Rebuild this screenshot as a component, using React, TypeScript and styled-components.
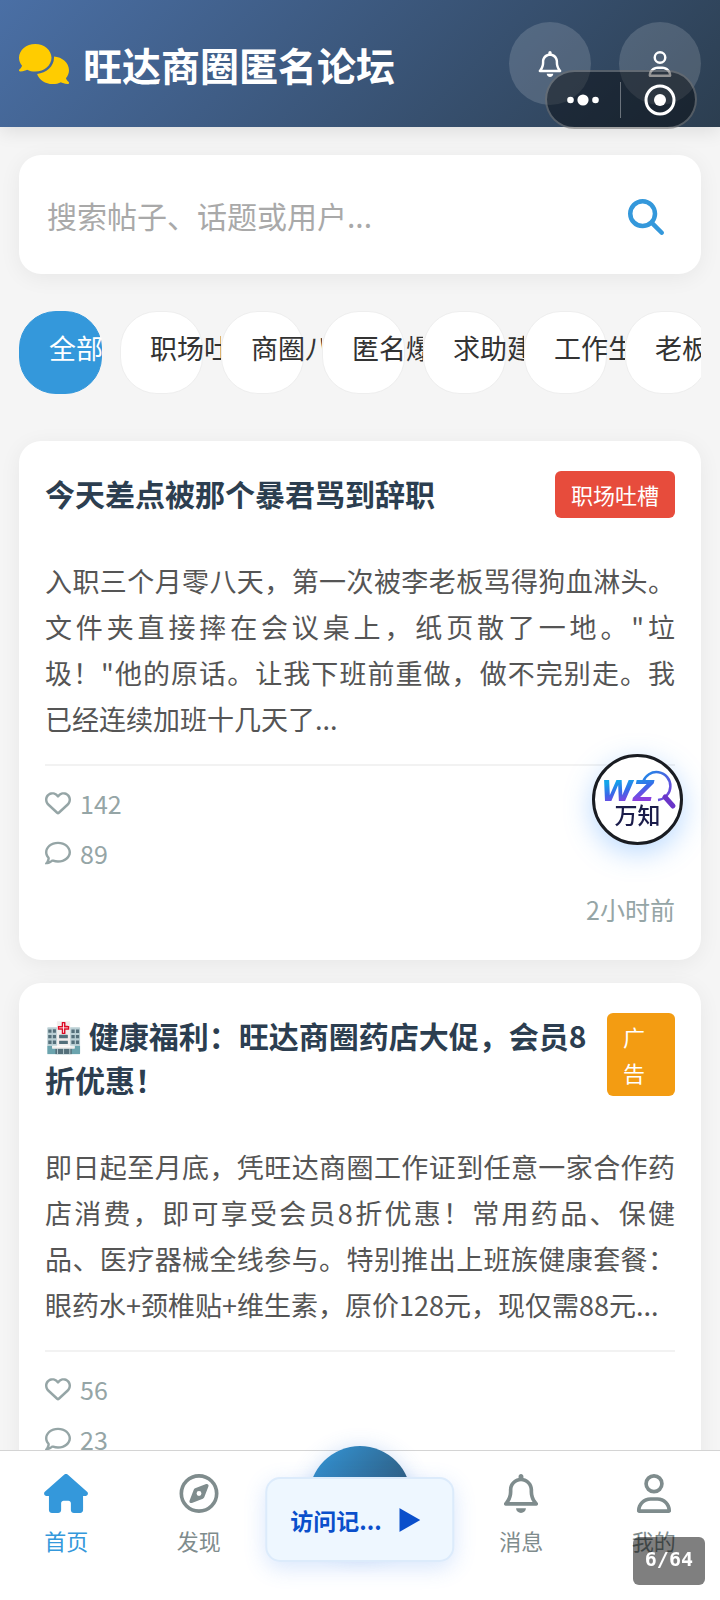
import React from 'react';
import styled, { createGlobalStyle, css } from 'styled-components';
import {
  FaComments,
  FaHouse,
  FaMagnifyingGlass,
  FaRegBell,
  FaRegComment,
  FaRegCompass,
  FaRegHeart,
  FaRegUser,
} from 'react-icons/fa6';

const GlobalStyle = createGlobalStyle`
  *, *::before, *::after { box-sizing: border-box; }
  body {
    margin: 0;
    background: #f5f5f5;
    color: #333;
    font-family: "Noto Sans CJK SC", "Noto Sans", sans-serif;
  }
  button, input { font: inherit; color: inherit; border: 0; padding: 0; background: none; }
  h1, h2, p { margin: 0; }
  svg { display: block; flex: none; }
`;

const Viewport = styled.div`
  height: 100vh;
  overflow: hidden;
  display: flex;
  flex-direction: column;
`;

const Header = styled.header`
  display: flex;
  align-items: center;
  justify-content: space-between;
  padding: 22px 19px;
  flex: none;
  background: linear-gradient(135deg, #4a6fa5 0%, #2c3e50 100%);
  box-shadow: 0 4px 18px rgba(0, 0, 0, 0.1);
  color: #fff;
`;

const Brand = styled.div`
  display: flex;
  align-items: center;
  gap: 14px;

  svg { width: 50px; height: 40px; color: #ffcc00; }
`;

const BrandName = styled.h1`
  font-size: 39px;
  line-height: 56px;
  font-weight: 700;
  white-space: nowrap;
`;

const HeaderActions = styled.div`
  display: flex;
  gap: 28px;
`;

const RoundButton = styled.button`
  width: 82px;
  height: 83px;
  border-radius: 50%;
  background: rgba(255, 255, 255, 0.15);
  display: grid;
  place-items: center;

  svg { width: 26px; height: 26px; }
`;

const Content = styled.main`
  flex: 1;
  min-height: 0;
  overflow: hidden;
  padding: 28px 19px 0;
`;

const surface = css`
  background: #fff;
  border-radius: 22px;
  box-shadow: 0 4px 22px rgba(0, 0, 0, 0.06);
`;

const SearchBox = styled.form`
  ${surface}
  display: flex;
  align-items: center;
  height: 119px;
  padding: 0 37px 0 28px;

  input {
    flex: 1;
    min-width: 0;
    font-size: 30px;
    line-height: 44px;
    outline: none;
  }
  input::placeholder { color: #a9a9a9; opacity: 1; }
  button { padding-top: 4px; }
  svg { width: 36px; height: 36px; color: #3498db; }
`;

const Tabs = styled.nav`
  display: flex;
  overflow: hidden;
  margin: 37px 0 47px;
`;

const TabSlot = styled.div`
  flex: none;
  width: 101px;
  overflow: hidden;
`;

const Tab = styled.button<{ $active?: boolean }>`
  display: block;
  width: 83px;
  height: 83px;
  padding: 0 0 10px 29px;
  border: 1px solid ${(p) => (p.$active ? '#3498db' : '#eee')};
  border-radius: 37px;
  background: ${(p) => (p.$active ? '#3498db' : '#fff')};
  color: ${(p) => (p.$active ? '#fff' : '#333')};
  font-size: 27px;
  line-height: 44px;
  text-align: left;
  white-space: nowrap;
`;

const Feed = styled.div`
  display: flex;
  flex-direction: column;
  gap: 23px;
`;

const Card = styled.article`
  ${surface}
  padding: 30px 26px;
`;

const CardHead = styled.div`
  display: flex;
  justify-content: space-between;
  align-items: flex-start;
  margin-bottom: 35px;
`;

const CardTitle = styled.h2`
  margin-bottom: 8px;
  font-size: 30px;
  line-height: 44px;
  font-weight: 700;
  color: #2c3e50;
`;

const Tag = styled.span<{ $color: string; $narrow?: boolean }>`
  flex: none;
  width: ${(p) => (p.$narrow ? '68px' : 'auto')};
  padding: 5px 16px 6px;
  border-radius: 6px;
  background: ${(p) => p.$color};
  color: #fff;
  font-size: 22px;
  line-height: 36px;
`;

const CardText = styled.p`
  font-size: 27px;
  line-height: 46px;
  color: #555;
  text-align: justify;
`;

const CardFoot = styled.footer`
  display: flex;
  flex-direction: column;
  align-items: flex-start;
  gap: 8px;
  margin-top: 22px;
  padding-top: 16px;
  border-top: 2px solid #f2f2f2;
  color: #95a5a6;
  font-size: 25px;
  line-height: 42px;
`;

const Stat = styled.button`
  display: flex;
  align-items: center;
  gap: 9px;

  svg { width: 26px; height: 26px; }
`;

const PostTime = styled.time`
  align-self: flex-end;
  margin-top: 6px;
`;

const NavBar = styled.nav`
  position: relative;
  flex: none;
  display: flex;
  height: 150px;
  background: #fff;
  border-top: 1px solid #d4d4d4;
`;

const NavItem = styled.a<{ $active?: boolean }>`
  flex: 1;
  display: flex;
  flex-direction: column;
  align-items: center;
  gap: 9px;
  padding-top: 23px;
  color: ${(p) => (p.$active ? '#3498db' : '#7f8c8d')};
  font-size: 22px;
  line-height: 36px;
  text-decoration: none;

  svg { width: 44px; height: 39px; }
`;

const PublishSlot = styled.div`
  width: 190px;
  display: flex;
  justify-content: center;
`;

const PublishButton = styled.button`
  width: 102px;
  height: 102px;
  margin-top: -5px;
  border-radius: 50%;
  background: linear-gradient(135deg, #3498db, #2c3e50);
  box-shadow: 0 4px 22px rgba(52, 120, 219, 0.3);
`;

const VisitBubble = styled.button`
  position: absolute;
  left: 50%;
  top: 26px;
  transform: translateX(-50%);
  display: flex;
  align-items: center;
  gap: 18px;
  height: 85px;
  padding: 0 32px 0 23px;
  border: 2px solid #dcebfb;
  border-radius: 15px;
  background: #eef7ff;
  box-shadow: 0 6px 22px rgba(60, 130, 240, 0.2);
  color: #0a4fcb;
  font-size: 23px;
  line-height: 36px;
  font-weight: 700;
  white-space: nowrap;
`;

const PageBadge = styled.div`
  position: fixed;
  right: 15px;
  bottom: 15px;
  padding: 4px 12px 8px;
  border-radius: 6px;
  background: rgba(0, 0, 0, 0.5);
  color: #fff;
  font-family: "DejaVu Sans Mono", monospace;
  font-size: 20px;
  line-height: 36px;
  font-weight: 700;
`;

const Capsule = styled.div`
  position: fixed;
  top: 70px;
  right: 23px;
  display: flex;
  align-items: center;
  width: 152px;
  height: 59px;
  border: 2px solid rgba(255, 255, 255, 0.25);
  border-radius: 30px;
  background: rgba(0, 0, 0, 0.42);
  color: #fff;

  button { flex: 1; display: grid; place-items: center; padding-right: 2px; }
  button + button { position: relative; padding: 0 0 0 4px; }
  button + button::before {
    content: "";
    position: absolute;
    left: 0;
    width: 1px;
    height: 36px;
    background: rgba(255, 255, 255, 0.35);
  }
`;

const Assistant = styled.button`
  position: fixed;
  top: 754px;
  right: 37px;
  width: 91px;
  height: 91px;
  border-radius: 50%;
  box-shadow: 0 8px 28px rgba(60, 150, 255, 0.35);
`;

const AssistantLogo = () => (
  <svg width="91" height="91" viewBox="0 0 91 91" aria-hidden="true">
    <defs>
      <linearGradient id="wz" gradientUnits="userSpaceOnUse" x1="30" y1="26" x2="35" y2="48">
        <stop offset="0" stopColor="#12a5ea" />
        <stop offset="0.5" stopColor="#3a68e8" />
        <stop offset="1" stopColor="#8a3fe0" />
      </linearGradient>
      <linearGradient id="lens" x1="0" y1="0" x2="1" y2="1">
        <stop offset="0" stopColor="#1c8be8" />
        <stop offset="1" stopColor="#7a3fd8" />
      </linearGradient>
    </defs>
    <circle cx="45.500" cy="45.500" r="44" fill="#fff" stroke="#191c22" strokeWidth="3" />
    <text x="9" y="47" fontFamily="DejaVu Sans, sans-serif" fontWeight="700" fontStyle="italic" fontSize="29" fill="url(#wz)">
      WZ
    </text>
    <path d="M51 28 A14 14 0 1 1 66 46" fill="none" stroke="url(#lens)" strokeWidth="2.500" />
    <path d="M73 43 L81 52" stroke="#6a35c8" strokeWidth="5" strokeLinecap="round" />
    <text x="45.500" y="70" textAnchor="middle" fontFamily="Noto Sans CJK SC, sans-serif" fontWeight="500" fontSize="23" fill="#1b1c4a">
      万知
    </text>
  </svg>
);

const tabs = ['全部', '职场吐槽', '商圈八卦', '匿名爆料', '求助建议', '工作生活', '老板吐槽'];

type Post = {
  title: string;
  tag: string;
  color: string;
  narrow?: boolean;
  text: string;
  likes: number;
  comments: number;
  time: string;
};

const posts: Post[] = [
  {
    title: '今天差点被那个暴君骂到辞职',
    tag: '职场吐槽',
    color: '#e74c3c',
    text: '入职三个月零八天，第一次被李老板骂得狗血淋头。文件夹直接摔在会议桌上，纸页散了一地。"垃圾！"他的原话。让我下班前重做，做不完别走。我已经连续加班十几天了...',
    likes: 142,
    comments: 89,
    time: '2小时前',
  },
  {
    title: '🏥 健康福利：旺达商圈药店大促，会员8折优惠！',
    tag: '广告',
    color: '#f39c12',
    narrow: true,
    text: '即日起至月底，凭旺达商圈工作证到任意一家合作药店消费，即可享受会员8折优惠！常用药品、保健品、医疗器械全线参与。特别推出上班族健康套餐：眼药水+颈椎贴+维生素，原价128元，现仅需88元...',
    likes: 56,
    comments: 23,
    time: '3小时前',
  },
];

const PostCard = ({ post }: { post: Post }) => (
  <Card>
    <CardHead>
      <CardTitle>{post.title}</CardTitle>
      <Tag $color={post.color} $narrow={post.narrow}>{post.tag}</Tag>
    </CardHead>
    <CardText>{post.text}</CardText>
    <CardFoot>
      <Stat aria-label="点赞"><FaRegHeart />{post.likes}</Stat>
      <Stat aria-label="评论"><FaRegComment />{post.comments}</Stat>
      <PostTime>{post.time}</PostTime>
    </CardFoot>
  </Card>
);

export default function App() {
  return (
    <>
      <GlobalStyle />
      <Viewport>
        <Header>
          <Brand>
            <FaComments />
            <BrandName>旺达商圈匿名论坛</BrandName>
          </Brand>
          <HeaderActions>
            <RoundButton aria-label="通知"><FaRegBell /></RoundButton>
            <RoundButton aria-label="用户"><FaRegUser /></RoundButton>
          </HeaderActions>
        </Header>

        <Content>
          <SearchBox>
            <input type="text" aria-label="搜索" placeholder="搜索帖子、话题或用户..." />
            <button type="button" aria-label="搜索"><FaMagnifyingGlass /></button>
          </SearchBox>
          <Tabs>
            {tabs.map((name, i) => (
              <TabSlot key={name}>
                <Tab $active={i === 0}>{name}</Tab>
              </TabSlot>
            ))}
          </Tabs>
          <Feed>
            {posts.map((post) => (
              <PostCard key={post.title} post={post} />
            ))}
          </Feed>
        </Content>

        <NavBar>
          <NavItem href="#home" $active><FaHouse />首页</NavItem>
          <NavItem href="#discover"><FaRegCompass />发现</NavItem>
          <PublishSlot>
            <PublishButton aria-label="发布" />
          </PublishSlot>
          <NavItem href="#messages"><FaRegBell />消息</NavItem>
          <NavItem href="#me"><FaRegUser />我的</NavItem>
          <VisitBubble>
            访问记...
            <svg width="21" height="24" viewBox="0 0 21 24" aria-hidden="true">
              <path d="M0 0 L21 12 L0 24 Z" fill="currentColor" />
            </svg>
          </VisitBubble>
        </NavBar>
      </Viewport>

      <Capsule>
        <button aria-label="更多">
          <svg width="32" height="12" viewBox="0 0 32 12" fill="currentColor">
            <circle cx="3.500" cy="6" r="3.300" />
            <circle cx="16" cy="6" r="5.600" />
            <circle cx="28.500" cy="6" r="3.300" />
          </svg>
        </button>
        <button aria-label="关闭">
          <svg width="32" height="32" viewBox="0 0 32 32">
            <circle cx="16" cy="16" r="14" fill="none" stroke="currentColor" strokeWidth="3" />
            <circle cx="16" cy="16" r="6" fill="currentColor" />
          </svg>
        </button>
      </Capsule>
      <Assistant aria-label="万知"><AssistantLogo /></Assistant>
      <PageBadge>6/64</PageBadge>
    </>
  );
}
